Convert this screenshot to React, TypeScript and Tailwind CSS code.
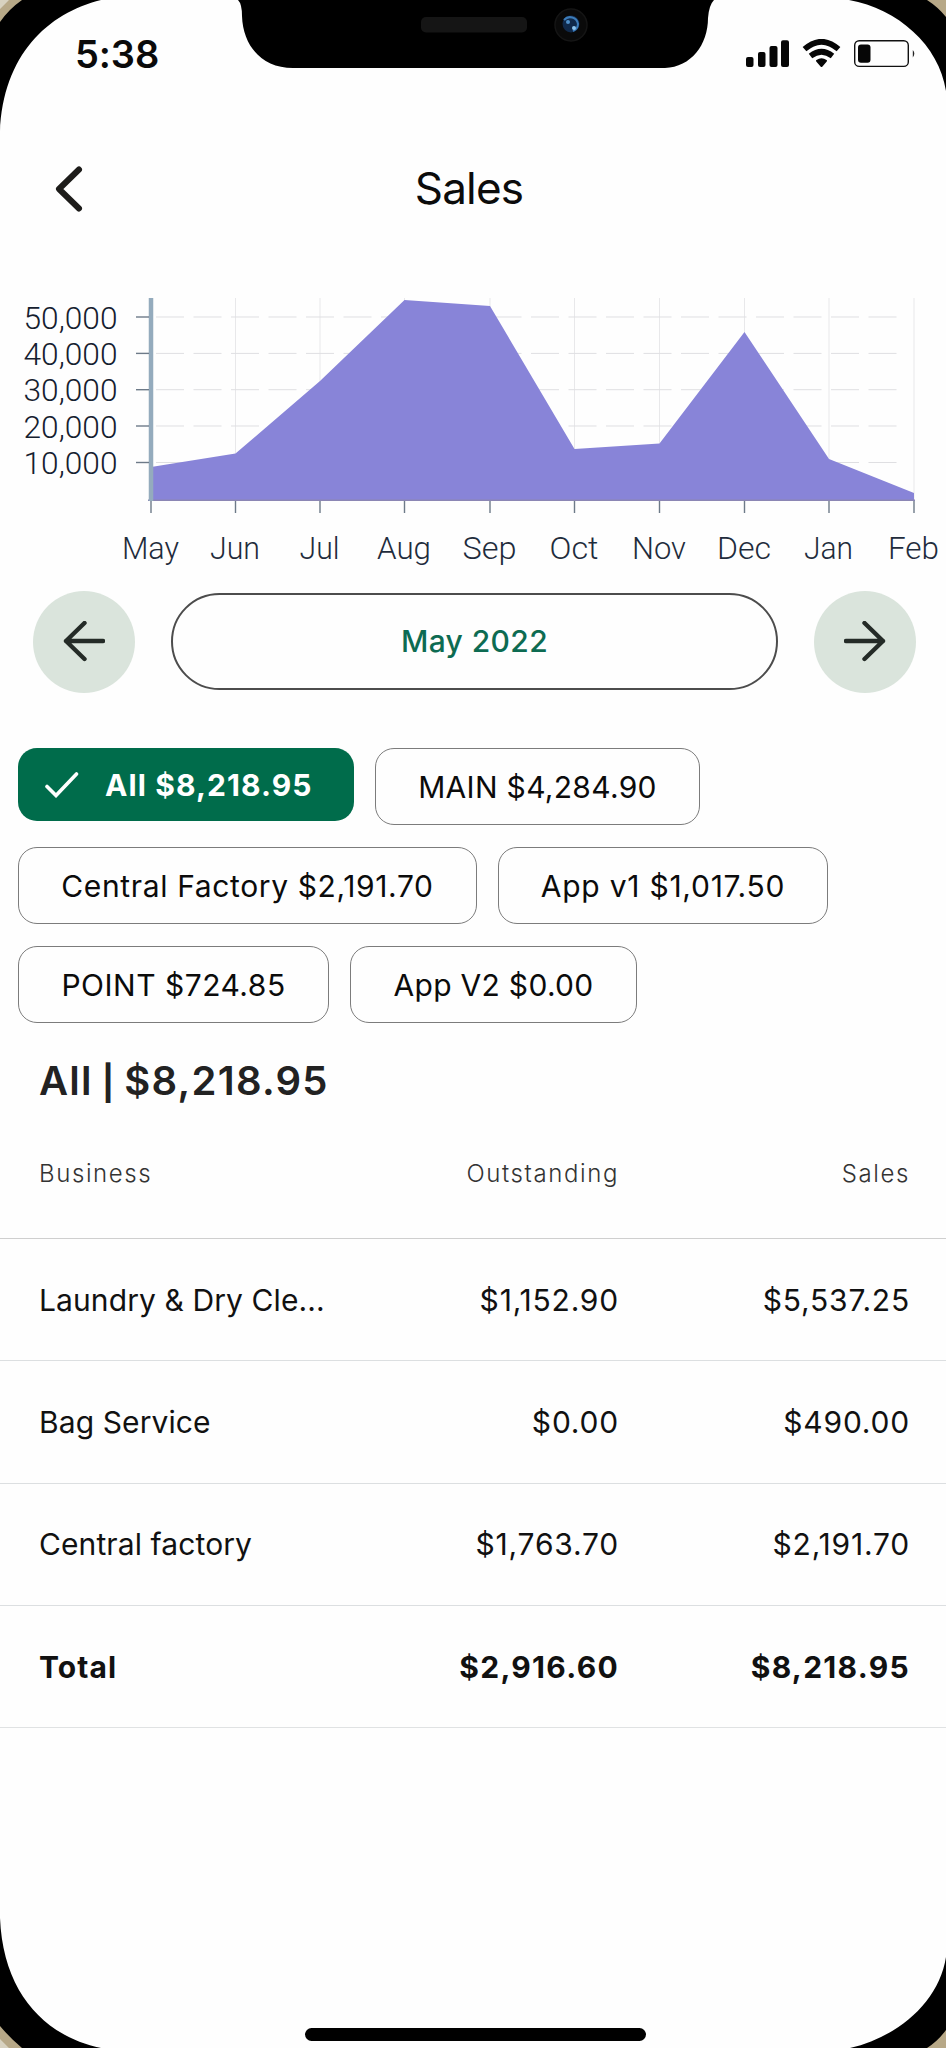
import React from "react";

const points = [
  { month: "May", x: 151, y: 467, w: 57 },
  { month: "Jun", x: 235.5, y: 453.5, w: 50 },
  { month: "Jul", x: 320, y: 381, w: 40 },
  { month: "Aug", x: 404.5, y: 300, w: 54 },
  { month: "Sep", x: 490, y: 306, w: 54 },
  { month: "Oct", x: 574.5, y: 449, w: 49 },
  { month: "Nov", x: 659.5, y: 443.5, w: 54 },
  { month: "Dec", x: 744.5, y: 332, w: 54 },
  { month: "Jan", x: 829, y: 459, w: 49 },
  { month: "Feb", x: 914, y: 493, w: 51 },
];

const levels = [
  { label: "50,000", y: 317 },
  { label: "40,000", y: 353.4 },
  { label: "30,000", y: 389.7 },
  { label: "20,000", y: 426 },
  { label: "10,000", y: 462.5 },
];

const rows = [
  { name: "Laundry & Dry Cle...", outstanding: "$1,152.90", sales: "$5,537.25" },
  { name: "Bag Service", outstanding: "$0.00", sales: "$490.00" },
  { name: "Central factory", outstanding: "$1,763.70", sales: "$2,191.70" },
];

function StatusBar() {
  return (
    <div className="flex h-[108px] items-center justify-between pl-[75px] pr-[30px]">
      <span className="text-[38px] font-semibold leading-none tracking-[-0.1px] text-[#0a0a0a]">5:38</span>
      <svg width="171" height="30" viewBox="745 39 171 30" className="text-black">
        <g fill="#060606">
          <rect x="746" y="57" width="7.5" height="10" rx="2" />
          <rect x="758" y="52" width="7.5" height="15" rx="2" />
          <rect x="769.5" y="46" width="8" height="21" rx="2" />
          <rect x="781" y="40.3" width="8" height="26.7" rx="2" />
          <path d="M817 60.8 Q821.5 57.8 826 60.8 L821.5 66 Z" strokeLinejoin="round" stroke="#060606" strokeWidth="2" />
        </g>
        <g fill="none" stroke="#060606" strokeWidth="5.6">
          <path d="M804.5 49.2 Q821.5 34.3 838.5 49.2" />
          <path d="M810.5 56 Q821.5 47.5 832.5 56" />
        </g>
        <rect x="854.7" y="40.8" width="53.6" height="25.6" rx="4.5" fill="none" stroke="#111" strokeWidth="1.4" />
        <rect x="858" y="44.5" width="12.5" height="18.3" rx="3" fill="#060606" />
        <path d="M912.8 50 q3 3.5 0 7.5z" fill="#222" />
      </svg>
    </div>
  );
}

function SalesChart() {
  const area = "M151 501 " + points.map((p) => "L" + p.x + " " + p.y).join(" ") + " L914 501Z";
  return (
    <svg width="946" height="300" viewBox="0 280 946 300" className="block font-['Roboto','Liberation_Sans',sans-serif]">
      <g stroke="#e8e8ea" strokeWidth="1">
        {points.slice(1).map((p) => (
          <line key={p.month} x1={p.x} x2={p.x} y1="298" y2="501" />
        ))}
        {levels.map((l) => (
          <line key={l.label} x1="156" x2="904" y1={l.y} y2={l.y} strokeDasharray="28 9.5" stroke="#dfdfe2" />
        ))}
      </g>
      <path d={area} fill="#8884d8" />
      <line x1="148" x2="915" y1="500.2" y2="500.2" stroke="#8b86b4" strokeWidth="1.5" />
      <line x1="151" x2="151" y1="298" y2="501" stroke="#94abbd" strokeWidth="4.5" />
      <g stroke="#6d7a88" strokeWidth="1.4">
        {points.map((p) => (
          <line key={p.month} x1={p.x} x2={p.x} y1="501" y2="513" />
        ))}
        {levels.map((l) => (
          <line key={l.label} x1="136" x2="149" y1={l.y} y2={l.y} />
        ))}
      </g>
      <g fontSize="31.5" fontWeight="300" fill="#15202f">
        {levels.map((l) => (
          <text key={l.label} x="117.5" y={l.y + 11.7} textAnchor="end" textLength="94" lengthAdjust="spacingAndGlyphs">
            {l.label}
          </text>
        ))}
      </g>
      <g fontSize="31.5" fontWeight="300" fill="#1f2c3c">
        {points.map((p) => (
          <text key={p.month} x={p.x - 0.5} y="558.6" textAnchor="middle" textLength={p.w} lengthAdjust="spacingAndGlyphs">
            {p.month}
          </text>
        ))}
      </g>
    </svg>
  );
}

function Arrow({ flip = false }: { flip?: boolean }) {
  return (
    <div className="flex h-[102px] w-[102px] items-center justify-center rounded-full bg-[#dae4dc]">
      <svg width="42" height="42" viewBox="0 0 42 42" className={flip ? "-scale-x-100" : ""}>
        <path d="M21.5 2 L3 20 L21.5 38 M3 20 H40" fill="none" stroke="#242b27" strokeWidth="4.4" strokeLinejoin="round" strokeLinecap="round" />
      </svg>
    </div>
  );
}

function Chip({ label, width }: { label: string; width: string }) {
  return (
    <button className={"flex h-[77px] items-center justify-center rounded-[19px] border border-[#7c7c7c] text-[30px] leading-none text-[#0b0b0b] " + width}>
      {label}
    </button>
  );
}

function DeviceFrame() {
  return (
    <svg width="946" height="2048" viewBox="0 0 946 2048" className="pointer-events-none absolute left-0 top-0">
      <path d="M0 0 H101 C48 13 3 55 0 132Z" />
      <path d="M946 0 H849 C898 9 939 45 946 91Z" />
      <path d="M0 2048 H101 C44 2036 3 1992 0 1918Z" />
      <path d="M946 2048 H850 C898 2037 939 2002 946 1957Z" />
      <g fill="#b7a887">
        <path d="M0 0 H22 Q9 9 0 22Z" />
        <path d="M927 0 H946 V17 Q938 7 927 0Z" />
        <path d="M0 2026 Q10 2038 22 2048 H0Z" />
        <path d="M927 2048 Q938 2041 946 2030 V2048Z" />
      </g>
      <path d="M0 0 H9 L0 9Z M0 2039 L9 2048 H0Z" fill="#d8d2c0" />
      <path d="M238 0 Q242 4 242 16 C243 46 262 68 293 68 H665 C691 67 708 45 708 18 Q709 5 714 0Z" />
      <rect x="421" y="17" width="106" height="15.5" rx="5" fill="#151515" />
      <circle cx="571" cy="25" r="16" fill="#0a0a0a" stroke="#151515" strokeWidth="1.5" />
      <circle cx="571" cy="24" r="8.5" fill="#10294a" />
      <path d="M564 20 A8 8 0 0 1 578 24 A8 8 0 0 1 573 31" fill="none" stroke="#3c7bb8" strokeWidth="2" />
      <circle cx="568" cy="22" r="2" fill="#4f8fc9" />
      <circle cx="574" cy="28" r="2" fill="#8cc4ef" />
    </svg>
  );
}

export default function App() {
  return (
    <div className="relative flex h-[2048px] w-[946px] flex-col overflow-hidden bg-[#fefefe] font-['Inter','Liberation_Sans',sans-serif]">
      <StatusBar />
      <header className="grid h-[172px] grid-cols-[1fr_auto_1fr] items-start pr-[8px] pt-[57px]">
        <svg width="30" height="48" viewBox="54 165 30 48" className="ml-[54px]">
          <path d="M79 169.5 L59 189 L79 208.5" fill="none" stroke="#1d1c1a" strokeWidth="6" strokeLinecap="round" strokeLinejoin="round" />
        </svg>
        <h1 className="text-[44px] leading-[47px] tracking-[-0.8px] text-[#0b0b0b]">Sales</h1>
      </header>
      <SalesChart />
      <div className="flex items-start gap-[36px] pb-[55px] pl-[33px] pt-[11px]">
        <Arrow />
        <div className="mt-[2px] flex h-[97px] w-[607px] items-center justify-center rounded-full border-2 border-[#4c4c4c] text-[30px] font-medium tracking-[0.4px] text-[#0d6b52]">
          May 2022
        </div>
        <Arrow flip />
      </div>
      <div className="flex flex-col gap-[22px] pl-[18px]">
        <div className="flex gap-[21px]">
          <button className="flex h-[73px] w-[336px] items-center rounded-[19px] bg-[#006c4b] pl-[27px] text-[30px] font-bold leading-none tracking-[1.1px] text-white">
            <svg width="34" height="26" viewBox="0 0 34 26" className="mr-[26px]">
              <path d="M2 14.5 L11 23.5 L31.5 2" fill="none" stroke="#fff" strokeWidth="3.6" strokeLinecap="round" />
            </svg>
            All $8,218.95
          </button>
          <Chip label="MAIN $4,284.90" width="w-[325px] tracking-[0.3px]" />
        </div>
        <div className="flex gap-[21px]">
          <Chip label="Central Factory $2,191.70" width="w-[459px] tracking-[0.63px]" />
          <Chip label="App v1 $1,017.50" width="w-[330px] tracking-[0.75px]" />
        </div>
        <div className="flex gap-[21px]">
          <Chip label="POINT $724.85" width="w-[311px] tracking-[0.5px]" />
          <Chip label="App V2 $0.00" width="w-[287px] tracking-[0.3px]" />
        </div>
      </div>
      <h2 className="mt-[33px] h-[50px] pl-[39px] text-[40px] font-semibold leading-[50px] tracking-[1.25px] text-[#222] [word-spacing:-2.5px]">
        All <span className="text-[34px] font-bold leading-none">|</span> $8,218.95
      </h2>
      <table className="mt-[4.5px] w-full table-fixed border-collapse text-[#111]">
        <colgroup>
          <col className="w-[382px]" />
          <col className="w-[237px]" />
          <col className="w-[327px]" />
        </colgroup>
        <thead>
          <tr className="h-[128px] border-b border-[#cfcfcf] text-[24px] leading-none tracking-[1.6px] text-[#333]">
            <th className="pl-[39px] text-left font-light">Business</th>
            <th className="text-right font-light">Outstanding</th>
            <th className="pr-[36px] text-right font-light">Sales</th>
          </tr>
        </thead>
        <tbody>
          {rows.map((row) => (
            <tr key={row.name} className="h-[122.3px] border-b border-[#dcdfe1] text-[30px] leading-none tracking-[0.8px]">
              <td className="whitespace-nowrap pl-[39px] tracking-[0.1px]">{row.name}</td>
              <td className="text-right">{row.outstanding}</td>
              <td className="pr-[36px] text-right">{row.sales}</td>
            </tr>
          ))}
          <tr className="h-[122.3px] border-b border-[#e0e2e3] text-[30px] font-bold leading-none tracking-[1.3px]">
            <td className="pl-[39px] tracking-[1.1px]">Total</td>
            <td className="text-right">$2,916.60</td>
            <td className="pr-[36px] text-right">$8,218.95</td>
          </tr>
        </tbody>
      </table>
      <div className="mb-[7px] ml-[305px] mt-auto h-[13px] w-[341px] rounded-full bg-black" />
      <DeviceFrame />
    </div>
  );
}
